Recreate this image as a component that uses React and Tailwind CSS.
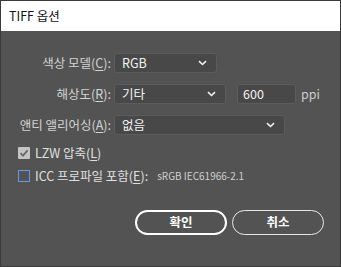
import React from "react";

const font = { fontFamily: '"Noto Sans CJK KR", "Noto Sans", sans-serif' };

function Chevron() {
  return (
    <svg width="9" height="6" viewBox="0 0 9 6" className="shrink-0">
      <path d="M1 1.2 L4.5 4.5 L8 1.2" fill="none" stroke="#f0f0f0" strokeWidth="1.6" />
    </svg>
  );
}

function Select({ value, w }) {
  return (
    <div className={`${w} h-[20px] flex items-center justify-between rounded-[3px] border border-[#5c5c5c] bg-[#484848] pl-[7px] pr-[9px] text-[12.5px] text-[#f2f2f2]`}>
      <span className="leading-none">{value}</span>
      <Chevron />
    </div>
  );
}

function U({ children }) {
  return <span className="underline underline-offset-2">{children}</span>;
}

export default function App() {
  return (
    <div
      className="w-[341px] h-[267px] border border-[#3a3a3a] bg-[#535353] flex flex-col overflow-hidden"
      style={font}
    >
      <div className="h-[30px] bg-white flex items-center pl-[8px] text-[12.5px] text-[#111] shrink-0">
        TIFF 옵션
      </div>
      <div className="flex flex-col pl-[13px] pt-[22px] text-[12.5px] text-[#d4d4d4]">
        <div className="flex items-center h-[20px] gap-[3px]">
          <div className="w-[97px] text-right leading-none whitespace-nowrap">
            색상 모델(<U>C</U>):
          </div>
          <Select value="RGB" w="w-[103px]" />
        </div>
        <div className="flex items-center h-[20px] gap-[3px] mt-[11px]">
          <div className="w-[97px] text-right leading-none">
            해상도(<U>R</U>):
          </div>
          <Select value="기타" w="w-[112px]" />
          <div className="ml-[8px] w-[59px] h-[20px] flex items-center rounded-[3px] border border-[#5c5c5c] bg-[#484848] pl-[5px] text-[12.5px] text-[#f2f2f2]">
            600
          </div>
          <span className="ml-[2px] text-[12.5px] text-[#c8ccd0] leading-none">ppi</span>
        </div>
        <div className="flex items-center h-[20px] gap-[3px] mt-[11px]">
          <div className="w-[97px] text-right leading-none whitespace-nowrap">
            앤티 앨리어싱(<U>A</U>):
          </div>
          <Select value="없음" w="w-[171px]" />
        </div>
        <div className="flex items-center h-[20px] mt-[8px] pl-[4px] gap-[5px]">
          <div className="w-[12px] h-[12px] rounded-[1px] bg-[#c4c4c4] flex items-center justify-center">
            <svg width="10" height="10" viewBox="0 0 10 10">
              <path d="M1.5 5.2 L4 7.6 L8.6 2.4" fill="none" stroke="#686868" strokeWidth="1.8" />
            </svg>
          </div>
          <span className="leading-none text-[#e0e0e0]">
            LZW 압축(<U>L</U>)
          </span>
        </div>
        <div className="flex items-center h-[20px] mt-[3px] pl-[4px] gap-[5px]">
          <div className="w-[12px] h-[12px] border border-[#5ea1e6]" />
          <span className="leading-none text-[#e0e0e0]">
            ICC 프로파일 포함(<U>E</U>):
          </span>
          <span className="ml-[4px] text-[10px] leading-none text-[#cfcfcf]">sRGB IEC61966-2.1</span>
        </div>
        <div className="flex justify-end gap-[5px] mt-[24px] pr-[16px]">
          <div className="w-[92px] h-[25px] rounded-full border-2 border-white flex items-center justify-center text-[12.5px] font-bold text-white">
            확인
          </div>
          <div className="w-[92px] h-[25px] rounded-full border border-[#e8e8e8] flex items-center justify-center text-[12.5px] font-bold text-white">
            취소
          </div>
        </div>
      </div>
    </div>
  );
}
